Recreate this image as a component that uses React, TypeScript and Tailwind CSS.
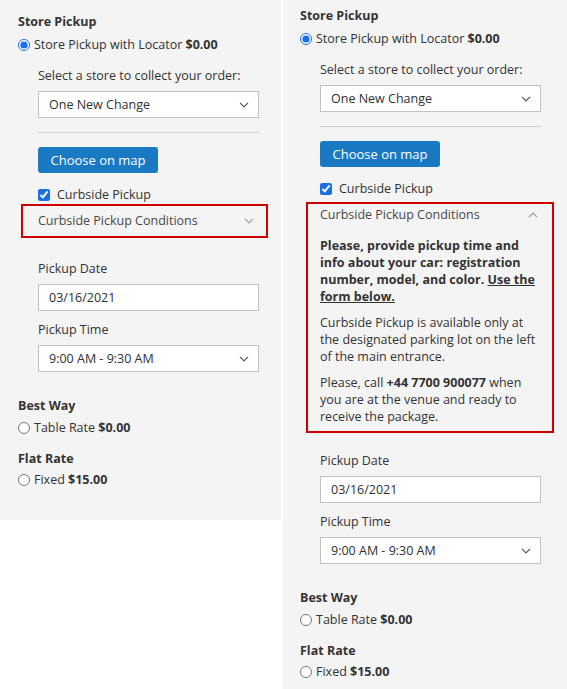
import React from "react";

function Chevron({ up = false, className = "" }: { up?: boolean; className?: string }) {
  return (
    <svg width="10" height="6" viewBox="0 0 10 6" className={className} fill="none">
      <path
        d={up ? "M1 5.2L5 1.2l4 4" : "M1 0.8l4 4 4-4"}
        stroke="currentColor"
        strokeWidth="1.2"
      />
    </svg>
  );
}

function Field({ value, select = false }: { value: string; select?: boolean }) {
  return (
    <div className="mt-[7px] h-[27px] bg-white border border-[#c2c2c2] flex items-center justify-between pl-[10px] pr-[9px]">
      <span className="text-[#303030]">{value}</span>
      {select && <Chevron className="text-[#555]" />}
    </div>
  );
}

function Radio({ checked = false, children }: { checked?: boolean; children: React.ReactNode }) {
  return (
    <label className="flex items-center h-[17px]">
      <input
        type="radio"
        readOnly
        checked={checked}
        className="m-0 w-[12px] h-[12px] accent-[#1a6ee8]"
      />
      <span className="ml-[4px]">{children}</span>
    </label>
  );
}

type PanelProps = { open: boolean };

function Panel({ open }: PanelProps) {
  return (
    <div
      className={
        open
          ? "w-[284px] h-[689px] bg-[#f4f4f4] pt-[7px] pl-[17px]"
          : "w-[281px] h-[520px] bg-[#f4f4f4] pt-[13px] pl-[18px]"
      }
    >
      <div className="font-bold leading-[17px]">Store Pickup</div>
      <div className="mt-[6px]">
        <Radio checked>
          Store Pickup with Locator <b>$0.00</b>
        </Radio>
      </div>

      <div className="ml-[20px] w-[221px]">
        <div className="mt-[14px]">Select a store to collect your order:</div>
        <Field value="One New Change" select />
        <div className="mt-[14px] h-px bg-[#cfcfcf]" />
        <button className="mt-[14px] h-[26px] w-[120px] bg-[#1979c3] text-white text-[13px] rounded-[3px]">
          Choose on map
        </button>
        <label className="mt-[13px] flex items-center h-[17px]">
          <input type="checkbox" readOnly checked className="m-0 w-[12px] h-[12px] accent-[#1a6ee8]" />
          <span className="ml-[7px]">Curbside Pickup</span>
        </label>

        {open ? (
          <div className="mt-[5px] -ml-[14px] -mr-[13px] border-2 border-[#cc0000] pt-[2px] pb-[6px] pl-[12px] pr-[11px]">
            <div className="flex items-center justify-between text-[#484848]">
              <span>Curbside Pickup Conditions</span>
              <Chevron up className="text-[#999] mr-[3px]" />
            </div>
            <p className="mt-[14px] font-bold">
              Please, provide pickup time and info about your car: registration number, model, and color.{" "}
              <span className="underline">Use the form below.</span>
            </p>
            <p className="mt-[9px]">
              Curbside Pickup is available only at the designated parking lot on the left of the main entrance.
            </p>
            <p className="mt-[9px]">
              Please, call <b>+44 7700 900077</b> when you are at the venue and ready to receive the package.
            </p>
          </div>
        ) : (
          <div className="mt-[1px] -ml-[17px] -mr-[9px] border-2 border-[#cc0000] pt-[6px] pb-[7px] pl-[15px] pr-[12px]">
            <div className="flex items-center justify-between text-[#484848]">
              <span>Curbside Pickup Conditions</span>
              <Chevron className="text-[#999]" />
            </div>
          </div>
        )}

        <div className={open ? "mt-[19px]" : "mt-[22px]"}>Pickup Date</div>
        <Field value="03/16/2021" />
        <div className="mt-[10px]">Pickup Time</div>
        <Field value="9:00 AM - 9:30 AM" select />
      </div>

      <div className="mt-[25px] font-bold">Best Way</div>
      <div className="mt-[5px]">
        <Radio>
          Table Rate <b>$0.00</b>
        </Radio>
      </div>
      <div className="mt-[14px] font-bold">Flat Rate</div>
      <div className="mt-[4px]">
        <Radio>
          Fixed <b>$15.00</b>
        </Radio>
      </div>
    </div>
  );
}

export default function App() {
  return (
    <div className="w-[567px] h-[689px] bg-white flex items-start gap-[2px] font-['Open_Sans',sans-serif] text-[12.5px] leading-[17px] text-[#333]">
      <Panel open={false} />
      <Panel open />
    </div>
  );
}
